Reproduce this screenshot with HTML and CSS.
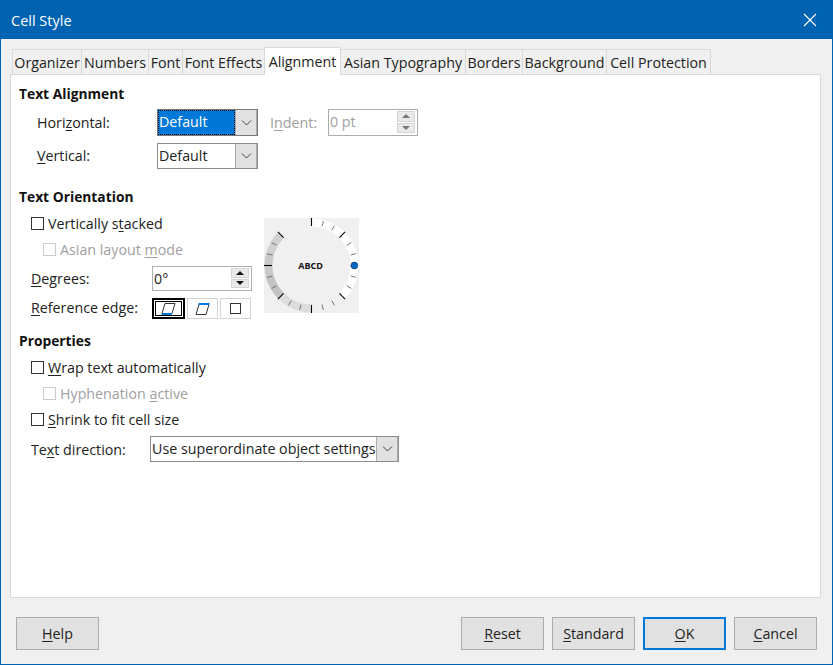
FILE: index.html
```html
<!DOCTYPE html>
<html lang="en">
<head>
  <meta charset="UTF-8">
  <title>Cell Style</title>
  <link rel="stylesheet" href="styles.css">
</head>
<body>
  <div class="dialog">
    <div class="titlebar">
      <span class="title">Cell Style</span>
      <svg class="close" width="14" height="14" viewBox="0 0 14 14"><path d="M1 1 13 13M13 1 1 13" stroke="#fff" stroke-width="1.1" fill="none"/></svg>
    </div>

    <div class="body">
      <div class="tabs">
        <div class="tab">Organizer</div>
        <div class="tab">Numbers</div>
        <div class="tab">Font</div>
        <div class="tab">Font Effects</div>
        <div class="tab active">Alignment</div>
        <div class="tab">Asian Typography</div>
        <div class="tab">Borders</div>
        <div class="tab">Background</div>
        <div class="tab">Cell Protection</div>
      </div>

      <div class="panel">
        <!-- Text Alignment -->
        <div class="heading">Text Alignment</div>
        <div class="row row-horizontal">
          <span class="label label-align">Hori<u>z</u>ontal:</span>
          <div class="select select-align focused">
            <span class="value"><span class="selected">Default</span></span>
            <span class="drop"><svg width="11" height="6" viewBox="0 0 11 6"><path d="M1 .5 5.5 5 10 .5" stroke="#444" fill="none"/></svg></span>
          </div>
          <span class="label label-indent disabled">I<u>n</u>dent:</span>
          <div class="spin spin-indent disabled">
            <span class="value">0 pt</span>
            <span class="spin-btns">
              <span class="spin-btn"><i class="arrow-up"></i></span>
              <span class="spin-btn"><i class="arrow-down"></i></span>
            </span>
          </div>
        </div>
        <div class="row row-vertical">
          <span class="label label-align"><u>V</u>ertical:</span>
          <div class="select select-align">
            <span class="value">Default</span>
            <span class="drop"><svg width="11" height="6" viewBox="0 0 11 6"><path d="M1 .5 5.5 5 10 .5" stroke="#444" fill="none"/></svg></span>
          </div>
        </div>

        <!-- Text Orientation -->
        <div class="heading heading-next">Text Orientation</div>
        <div class="orientation">
          <div class="orientation-left">
            <div class="check"><span class="box"></span>Vertically s<u>t</u>acked</div>
            <div class="check sub disabled"><span class="box"></span>Asian layout <u>m</u>ode</div>
            <div class="row row-degrees">
              <span class="label label-form"><u>D</u>egrees:</span>
              <div class="spin spin-degrees">
                <span class="value">0°</span>
                <span class="spin-btns">
                  <span class="spin-btn"><i class="arrow-up"></i></span>
                  <span class="spin-btn"><i class="arrow-down"></i></span>
                </span>
              </div>
            </div>
            <div class="row row-edge">
              <span class="label label-form"><u>R</u>eference edge:</span>
              <div class="edges">
                <span class="edge current">
                  <svg width="15" height="12" viewBox="0 0 15 12"><path d="M4 .5H14L11 10.5H1Z" stroke="#333" fill="none"/><path d="M1 10H11.2L10.6 12H.4Z" fill="#0078d7"/></svg>
                </span>
                <span class="edge">
                  <svg width="15" height="12" viewBox="0 0 15 12"><path d="M4 1.5H14L11 11.5H1Z" stroke="#333" fill="none"/><path d="M3.8 0H14.6L14 2H3.2Z" fill="#0078d7"/></svg>
                </span>
                <span class="edge">
                  <svg width="11" height="11" viewBox="0 0 11 11"><rect x=".5" y=".5" width="10" height="10" stroke="#333" fill="none"/></svg>
                </span>
              </div>
            </div>
          </div>

          <svg class="dial" width="95" height="95" viewBox="0 0 95 95">
            <rect width="95" height="95" fill="#f0f0f0"/>
            <g fill="none" stroke-width="8">
              <circle cx="47.5" cy="47.5" r="43" pathLength="360" stroke-dasharray="135 225" stroke="#fff" transform="rotate(-90 47.5 47.5)"/>
              <circle cx="47.5" cy="47.5" r="43" pathLength="360" stroke-dasharray="45 315" stroke="#dcdcdc" transform="rotate(90 47.5 47.5)"/>
              <circle cx="47.5" cy="47.5" r="43" pathLength="360" stroke-dasharray="30 330" stroke="#c3c3c3" transform="rotate(135 47.5 47.5)"/>
              <circle cx="47.5" cy="47.5" r="43" pathLength="360" stroke-dasharray="30 330" stroke="#c9c9c9" transform="rotate(165 47.5 47.5)"/>
              <circle cx="47.5" cy="47.5" r="43" pathLength="360" stroke-dasharray="30 330" stroke="#d0d0d0" transform="rotate(195 47.5 47.5)"/>
            </g>
            <defs>
              <path id="major" d="M47.5 0V8" stroke="#000" stroke-width="1.1"/>
              <path id="minor" d="M47.5 1.5V7" stroke="#666" stroke-width=".8"/>
            </defs>
            <use href="#major"/>
            <use href="#major" transform="rotate(45 47.5 47.5)"/>
            <use href="#major" transform="rotate(135 47.5 47.5)"/>
            <use href="#major" transform="rotate(180 47.5 47.5)"/>
            <use href="#major" transform="rotate(225 47.5 47.5)"/>
            <use href="#major" transform="rotate(270 47.5 47.5)"/>
            <use href="#major" transform="rotate(315 47.5 47.5)"/>
            <use href="#minor" transform="rotate(15 47.5 47.5)"/>
            <use href="#minor" transform="rotate(30 47.5 47.5)"/>
            <use href="#minor" transform="rotate(60 47.5 47.5)"/>
            <use href="#minor" transform="rotate(75 47.5 47.5)"/>
            <use href="#minor" transform="rotate(105 47.5 47.5)"/>
            <use href="#minor" transform="rotate(120 47.5 47.5)"/>
            <use href="#minor" transform="rotate(150 47.5 47.5)"/>
            <use href="#minor" transform="rotate(165 47.5 47.5)"/>
            <use href="#minor" transform="rotate(195 47.5 47.5)"/>
            <use href="#minor" transform="rotate(210 47.5 47.5)"/>
            <use href="#minor" transform="rotate(240 47.5 47.5)"/>
            <use href="#minor" transform="rotate(255 47.5 47.5)"/>
            <use href="#minor" transform="rotate(285 47.5 47.5)"/>
            <use href="#minor" transform="rotate(300 47.5 47.5)"/>
            <circle cx="90.3" cy="47.5" r="3.4" fill="#0067c0" stroke="#0a2a50" stroke-width=".6"/>
            <text x="46.5" y="50.7" class="dial-text" text-anchor="middle">ABCD</text>
          </svg>
        </div>

        <!-- Properties -->
        <div class="heading heading-props">Properties</div>
        <div class="check"><span class="box"></span><u>W</u>rap text automatically</div>
        <div class="check sub disabled"><span class="box"></span>Hyphenation <u>a</u>ctive</div>
        <div class="check"><span class="box"></span><u>S</u>hrink to fit cell size</div>
        <div class="row row-direction">
          <span class="label label-form">Te<u>x</u>t direction:</span>
          <div class="select select-direction">
            <span class="value">Use superordinate object settings</span>
            <span class="drop"><svg width="11" height="6" viewBox="0 0 11 6"><path d="M1 .5 5.5 5 10 .5" stroke="#444" fill="none"/></svg></span>
          </div>
        </div>
      </div>

      <div class="footer">
        <button class="btn btn-help"><u>H</u>elp</button>
        <button class="btn"><u>R</u>eset</button>
        <button class="btn"><u>S</u>tandard</button>
        <button class="btn default"><u>O</u>K</button>
        <button class="btn"><u>C</u>ancel</button>
      </div>
    </div>
  </div>
</body>
</html>
```

FILE: styles.css
```css
* { box-sizing: border-box; }
html, body { margin: 0; height: 100%; }
body { font-family: "Open Sans", "Noto Sans", sans-serif; font-size: 14.25px; color: #222; background: #f0f0f0; }
u { text-underline-offset: 2px; text-decoration-thickness: 1px; }

.dialog { height: 665px; display: flex; flex-direction: column; border: 1px solid #0063b1; }
.titlebar { height: 38px; flex: none; background: #0063b1; color: #fff; display: flex; align-items: center; justify-content: space-between; padding: 0 15px 0 10px; font-size: 14.5px; }
.body { flex: 1; display: flex; flex-direction: column; padding: 8px 11px 0 9px; }

/* tabs */
.tabs { display: grid; grid-template-columns: 70px 67px 34px 82px 76px 125px 57px 84px 104px; margin-left: 2px; height: 27px; flex: none; align-items: end; }
.tab { height: 25px; line-height: 25px; text-align: center; white-space: nowrap; border: 1px solid #d9d9d9; border-bottom: none; border-left-width: 0; }
.tab:first-child { border-left-width: 1px; }
.tab.active { height: 28px; line-height: 27px; margin-bottom: -1px; background: #fff; border-left-width: 1px; position: relative; z-index: 1; margin-left: -1px; }

.panel { height: 524px; flex: none; background: #fff; border: 1px solid #d9d9d9; padding: 9px 0 0 8px; }
.heading { height: 20px; line-height: 20px; font-weight: 700; font-size: 13.8px; color: #111; }
.heading-next { margin-top: 18px; }
.heading-props { margin-top: 12px; }

.row { display: flex; align-items: center; }
.row-horizontal { height: 27px; margin: 5px 0 0 18px; }
.row-vertical { height: 26px; margin: 7px 0 0 18px; }
.row-degrees { height: 25px; margin-top: 7px; }
.row-edge { height: 21px; margin-top: 7px; }
.row-direction { height: 26px; margin: 7px 0 0 12px; }
.row-vertical .label, .row-edge .label { padding-bottom: 2px; }
.label-align { width: 120px; }
.label-form { width: 121px; }
.row-direction .label-form { width: 119px; }
.label-indent { margin-left: 12px; width: 58px; }
.disabled { color: #a0a0a0; }

/* drop-down lists */
.select { display: flex; height: 100%; border: 1px solid #8c8c8c; background: #fff; }
.select .value { flex: 1; padding-left: 1px; line-height: 24px; white-space: nowrap; overflow: hidden; }
.select-align { width: 101px; }
.select-direction { width: 249px; }
.drop { width: 22px; flex: none; background: #e1e1e1; border-left: 1px solid #adadad; border-right: 1px solid #adadad; display: flex; align-items: center; justify-content: center; }
.selected { display: block; height: 100%; margin-left: -1px; padding-left: 1px; background: #0078d7; color: #fff; outline: 1px dotted #000; outline-offset: -1px; }
.focused { border-color: #777; }

/* spin fields */
.spin { display: flex; height: 100%; border: 1px solid #adadad; background: #fff; }
.spin .value { flex: 1; padding-left: 1px; line-height: 23px; }
.spin-indent { width: 90px; }
.spin-degrees { width: 100px; }
.spin-btns { width: 20px; flex: none; display: flex; flex-direction: column; gap: 1px; padding: 1px 2px 2px 0; }
.spin-btn { flex: 1; background: #e9e9e9; border: 1px solid #d4d4d4; display: flex; align-items: center; justify-content: center; }
.arrow-up, .arrow-down { width: 0; height: 0; border-left: 4px solid transparent; border-right: 4px solid transparent; }
.arrow-up { border-bottom: 4px solid #111; }
.arrow-down { border-top: 4px solid #111; }
.disabled .arrow-up { border-bottom-color: #777; }
.disabled .arrow-down { border-top-color: #777; }

/* check boxes */
.check { display: flex; align-items: center; height: 20px; margin: 6px 0 0 12px; white-space: pre; }
.check .box { width: 13px; height: 13px; flex: none; margin-right: 4px; border: 1px solid #333; background: #fff; }
.check.sub { margin-left: 24px; }
.check.disabled .box { border-color: #ccc; }

/* orientation block */
.orientation { display: flex; align-items: flex-start; margin-left: 12px; }
.orientation-left { width: 233px; }
.orientation .check { margin-left: 0; }
.orientation .check.sub { margin-left: 12px; }
.dial { margin-top: 11px; flex: none; }
.dial-text { font-family: "Open Sans", sans-serif; font-size: 9px; font-weight: 700; fill: #111; }

.edges { display: flex; height: 100%; gap: 2px; }
.edge { width: 31px; height: 100%; border: 1px solid #d4d4d4; background: #fff; display: flex; align-items: center; justify-content: center; }
.edge.current { width: 33px; border: 2px solid #000; box-shadow: inset 0 0 0 1px #fff, inset 0 0 0 2px #000; }

/* footer buttons */
.footer { display: flex; gap: 8px; margin: 19px 4px 0 6px; }
.btn { width: 83px; height: 33px; padding: 0; font: inherit; color: #222; background: #e1e1e1; border: 1px solid #adadad; }
.btn-help { margin-right: auto; }
.btn.default { border: 2px solid #0078d7; }
```
